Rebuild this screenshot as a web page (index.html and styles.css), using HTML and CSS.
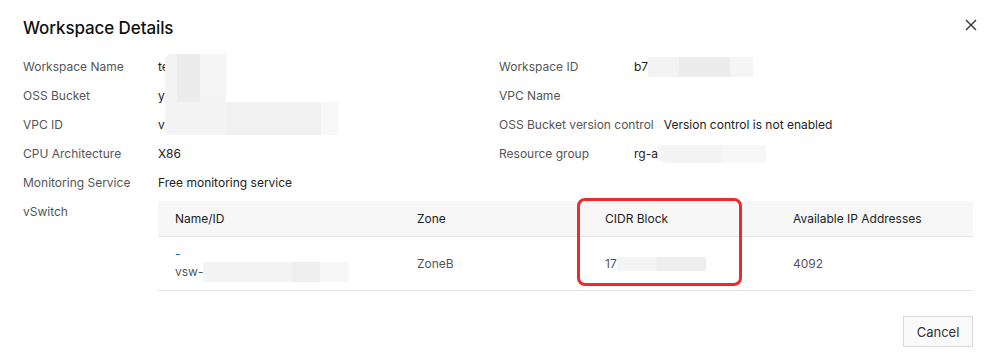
FILE: index.html
```html
<!DOCTYPE html>
<html>
<head>
  <title>Workspace Details</title>
  <link rel="stylesheet" href="styles.css">
</head>
<body>
  <div class="dialog">
    <div class="dialog-header">
      <h2>Workspace Details</h2>
      <span class="close">
        <svg width="12" height="12" viewBox="0 0 12 12"><path d="M1 1L11 11M11 1L1 11" stroke="#333" stroke-width="1.4"/></svg>
      </span>
    </div>

    <div class="details">
      <div class="item"><span class="label">Workspace Name</span><span class="value">te</span></div>
      <div class="item"><span class="label">Workspace ID</span><span class="value">b7<i class="mask mask-id"></i></span></div>
      <div class="item"><span class="label">OSS Bucket</span><span class="value">y.</span></div>
      <div class="item"><span class="label">VPC Name</span><span class="value"></span></div>
      <div class="item"><span class="label">VPC ID</span><span class="value">v.</span></div>
      <div class="item"><span class="label">OSS Bucket version control</span><span class="value">Version control is not enabled</span></div>
      <div class="item"><span class="label">CPU Architecture</span><span class="value">X86</span></div>
      <div class="item"><span class="label">Resource group</span><span class="value">rg-a<i class="mask mask-rg"></i></span></div>
      <div class="item"><span class="label">Monitoring Service</span><span class="value">Free monitoring service</span></div>
      <div class="item"></div>
      <i class="mask mask-top"></i>
      <i class="mask mask-bottom"></i>
    </div>

    <div class="vswitch">
      <span class="label">vSwitch</span>
      <div class="table-wrap">
        <table>
          <thead>
            <tr>
              <th class="col-name">Name/ID</th>
              <th class="col-zone">Zone</th>
              <th class="col-cidr">CIDR Block</th>
              <th>Available IP Addresses</th>
            </tr>
          </thead>
          <tbody>
            <tr>
              <td>
                <div class="link">-</div>
                <div class="sub">vsw-<i class="mask mask-vsw"></i></div>
              </td>
              <td>ZoneB</td>
              <td>17<i class="mask mask-cidr"></i></td>
              <td>4092</td>
            </tr>
          </tbody>
        </table>
        <div class="highlight"></div>
      </div>
    </div>

    <div class="footer">
      <button>Cancel</button>
    </div>
  </div>
</body>
</html>
```

FILE: styles.css
```css
body {
  margin: 0;
  background-color: #fff;
  font-family: Inter, "Liberation Sans", sans-serif;
  font-size: 12px;
  color: #333;
}

.dialog {
  width: 950px;
  padding: 0 20px 0 23px;
}

.dialog-header {
  display: flex;
  justify-content: space-between;
  align-items: center;
  height: 56px;
}

.dialog-header h2 {
  margin: 0;
  font-size: 17px;
  font-weight: 500;
  color: #111;
  letter-spacing: -0.1px;
}

.close {
  display: flex;
  margin-right: -4px;
  margin-top: -6px;
}

.details {
  position: relative;
  display: grid;
  grid-template-columns: 476px 1fr;
  margin-top: -4px;
}

.item {
  display: flex;
  height: 29px;
  align-items: center;
}

.label {
  min-width: 135px;
  padding-right: 10px;
  box-sizing: border-box;
  color: #555;
  white-space: nowrap;
}

.value {
  color: #222;
  display: flex;
  align-items: center;
}

.mask {
  display: inline-block;
  background-color: #f0f0f0;
}

.mask-id {
  width: 105px;
  height: 20px;
  background: linear-gradient(90deg, #f3f3f3 0 30%, #ececec 30% 78%, #f5f5f5 78%);
}

.mask-rg {
  width: 108px;
  height: 18px;
  border-radius: 0 0 0 9px;
  background: linear-gradient(90deg, #f4f4f4 0 60%, #f7f7f7 60%);
}

.mask-top {
  position: absolute;
  left: 142px;
  top: 2px;
  width: 61px;
  height: 48px;
  border-radius: 6px 0 0 0;
  background: linear-gradient(90deg, #f3f3f3 0 20%, #ececec 20% 58%, #f5f5f5 58%);
}

.mask-bottom {
  position: absolute;
  left: 142px;
  top: 50px;
  width: 173px;
  height: 33px;
  border-radius: 0 0 0 6px;
  background: linear-gradient(90deg, #f4f4f4 0 35%, #f1f1f1 35% 90%, #f8f8f8 90%);
}

.vswitch {
  display: flex;
  align-items: flex-start;
  margin-top: 0;
}

.vswitch .label {
  line-height: 29px;
}

.table-wrap {
  position: relative;
  flex: 1;
  margin-top: 4px;
}

table {
  width: 815px;
  border-collapse: collapse;
  table-layout: fixed;
}

th {
  background-color: #f7f7f7;
  height: 35px;
  padding: 0 17px;
  text-align: left;
  font-weight: 400;
  color: #222;
  border-bottom: 1px solid #e5e5e5;
}

.col-name {
  width: 208px;
}

.col-zone,
.col-cidr {
  width: 154px;
}

td {
  height: 53px;
  padding: 0 17px;
  color: #555;
  border-bottom: 1px solid #e5e5e5;
}

td .mask {
  vertical-align: middle;
}

.link {
  color: #0064c8;
  line-height: 16px;
  margin-top: 0;
}

.sub {
  display: flex;
  align-items: center;
  height: 20px;
  color: #555;
}

.mask-vsw {
  width: 146px;
  height: 20px;
  background: linear-gradient(90deg, #f4f4f4 0 60%, #efefef 60% 80%, #f6f6f6 80%);
}

.mask-cidr {
  width: 89px;
  height: 14px;
  background: linear-gradient(90deg, #f4f4f4 0 45%, #eeeeee 45%);
}

.highlight {
  position: absolute;
  left: 419px;
  top: -3px;
  width: 159px;
  height: 82px;
  border: 3px solid #ea2b2b;
  border-radius: 8px;
}

.footer {
  display: flex;
  justify-content: flex-end;
  margin-top: 25px;
}

button {
  width: 70px;
  height: 31px;
  background-color: #fafafa;
  border: 1px solid #d9d9d9;
  font-family: inherit;
  font-size: 13px;
  color: #333;
  cursor: pointer;
}
```
